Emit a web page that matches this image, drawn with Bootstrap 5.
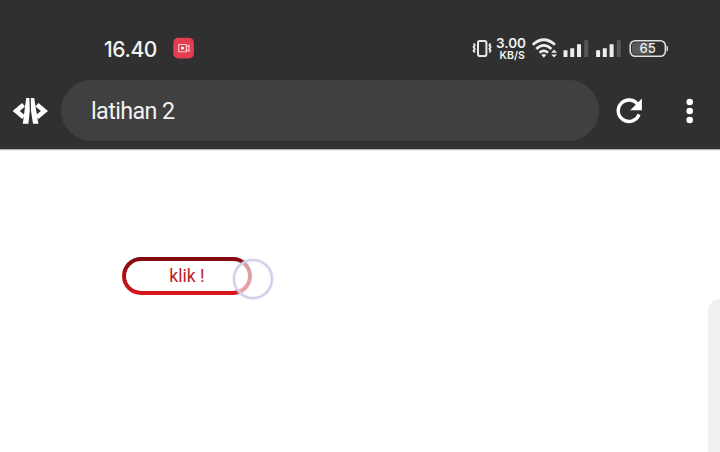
<!DOCTYPE html>
<html lang="id">
<head>
<meta charset="utf-8">
<meta name="viewport" content="width=device-width, initial-scale=1">
<title>latihan 2</title>
<link href="https://cdn.jsdelivr.net/npm/bootstrap@5.3.0/dist/css/bootstrap.min.css" rel="stylesheet">
<style>
  body { font-family: Roboto, "Liberation Sans", sans-serif; height: 452px; }
  .app-header { background: #303030; height: 149px; box-shadow: 0 1px 1px rgba(0,0,0,.3); }
  .status-bar { height: 80px; padding: 33px 52px 0 104px; color: #f2f2f2; }
  .clock { font: 500 21px/33px Inter, sans-serif; width: 69px; letter-spacing: -.4px; }
  .speed { font-family: Inter, sans-serif; font-weight: 600; width: 32px; margin-left: 2px; margin-right: 5px; padding-top: 4px; }
  .speed-num { font-size: 13.5px; line-height: 13px; }
  .speed-unit { font-size: 10.5px; line-height: 11px; padding: 0 1px 0 0; letter-spacing: .1px; }
  .tool-row { height: 61px; padding-left: 12px; }
  .url-pill { background: #404040; width: 538px; height: 61px; margin-left: 13px; padding: 1px 0 0 30px; color: #f2f2f2; font-size: 23.3px; letter-spacing: -.6px; }
  .reload-icon { margin-left: 17px; }
  .menu-icon { margin-left: 43px; }
  .page-area { height: 303px; padding: 108px 0 0 122px; }
  .klik-btn { width: 130px; height: 38px; padding: 0; font-size: 17.6px; line-height: 29px; color: #b81c22; border: 4px solid transparent;
    background: linear-gradient(#fff,#fff) padding-box, linear-gradient(#7e090f, #db171d) border-box; }
  .klik-btn:hover { color: #b81c22; }
  .touch-ring { left: 111px; top: 2px; width: 40px; height: 40px; border: 2px solid #cdceea; background: rgba(255,255,255,.6); box-shadow: 0 0 2px #c6c7e6, inset 0 0 2px #d8d8ef; }
  .side-panel { right: 0; bottom: 0; width: 12px; height: 153px; background: #f1f1f1; border-radius: 12px 0 0 0; }
</style>
</head>
<body class="bg-white overflow-hidden m-0">
<header class="app-header position-relative">
  <div class="status-bar d-flex align-items-start">
    <div class="clock">16.40</div>
    <svg width="22" height="26" viewBox="0 -4.5 22 26">
      <rect x=".3" y=".3" width="20.6" height="20.6" rx="5" fill="#e43d51"/>
      <path d="M5.7 7H13.3v7.2H5.7zM13.3 9.6l2.7-1.8v5.8L13.3 12" fill="none" stroke="#f9cfd4" stroke-width="1.1"/>
      <circle cx="9.5" cy="10.6" r="1.5" fill="#fff"/>
    </svg>
    <div class="d-flex ms-auto align-items-start">
      <svg width="20" height="30" viewBox="472 33 20 30" fill="none" stroke="#e8e8e8">
        <rect x="478" y="41" width="8.4" height="15" rx="1.8" stroke-width="2"/>
        <path d="M473.6 43.5l1.2 1.8-1.2 1.8 1.2 1.8-1.2 1.8 1.2 1.8M490.6 43.5l-1.2 1.8 1.2 1.8-1.2 1.8 1.2 1.8-1.2 1.8" stroke-width="1.9"/>
      </svg>
      <div class="speed text-end">
        <div class="speed-num">3.00</div>
        <div class="speed-unit">KB/S</div>
      </div>
      <svg width="137" height="30" viewBox="531 33 137 30" fill="#ededed">
        <g fill="none" stroke="#ededed" stroke-width="2.8">
          <path d="M532.8 44.8Q543.8 34.7 554.9 44.8M536.3 49Q543.8 41.8 551.4 49M539.6 52.8Q543.8 49 548 52.8"/>
        </g>
        <path d="M541.4 55q2.4-2 4.8 0l-2.4 2.7zM551.2 52.7l2.9-3.2 2.9 3.2zM551.2 54.4h5.8l-2.9 3.2z"/>
        <path id="bars" d="M563.5 50.3h4v6.7h-4zM570.2 48.3h4V57h-4zM577 44.2h4V57h-4z"/>
        <path d="M584.2 40.2h4V57h-4zM616.8 40.2h4V57h-4z" fill="#575757"/>
        <use href="#bars" x="32.6"/>
        <rect x="632" y="42.5" width="20" height="12" rx="3" fill="#595959"/>
        <rect x="630.2" y="40.7" width="35.2" height="15.6" rx="5" fill="none" stroke="#dedede" stroke-width="1.6"/>
        <path d="M666.6 45.5q1.4 0 1.4 3t-1.4 3z"/>
        <text x="647.7" y="53.2" text-anchor="middle" font-family="Inter, sans-serif" font-weight="500" font-size="13">65</text>
      </svg>
    </div>
  </div>
  <div class="tool-row d-flex align-items-center">
    <svg width="36" height="30" viewBox="12 96 36 30" fill="none" stroke="#fff">
      <path d="M23.6 104.8L16.2 111l7.4 6.2M37 104.8l7.4 6.2-7.4 6.2" stroke-width="4.6"/>
      <g fill="#fff" stroke="none"><path d="M26.2 98h3.2l.4 13-1.4 12.8h-5.6z"/>
      <path d="M30.8 98h3.4l4.2 25.8h-5.4L31 111z"/></g>
    </svg>
    <div class="url-pill rounded-pill d-flex align-items-center">latihan 2</div>
    <svg class="reload-icon" width="26" height="30" viewBox="616 96 26 30">
      <path d="M639 114.3A10.7 10.7 0 1 1 638 105" fill="none" stroke="#fff" stroke-width="3.4"/>
      <path d="M641.9 98.5v11.7h-11.7z" fill="#fff"/>
    </svg>
    <svg class="menu-icon" width="10" height="30" viewBox="0 0 10 30" fill="#fff">
      <circle cx="4.7" cy="6" r="3.3"/><circle cx="4.7" cy="15" r="3.3"/><circle cx="4.7" cy="24" r="3.3"/>
    </svg>
  </div>
</header>
<main class="page-area position-relative">
  <div class="position-relative d-inline-block">
    <button class="btn klik-btn rounded-pill d-block" type="button">klik !</button>
    <span class="touch-ring position-absolute rounded-circle"></span>
  </div>
  <div class="side-panel position-absolute"></div>
</main>
<script src="https://cdn.jsdelivr.net/npm/bootstrap@5.3.0/dist/js/bootstrap.bundle.min.js"></script>
</body>
</html>
